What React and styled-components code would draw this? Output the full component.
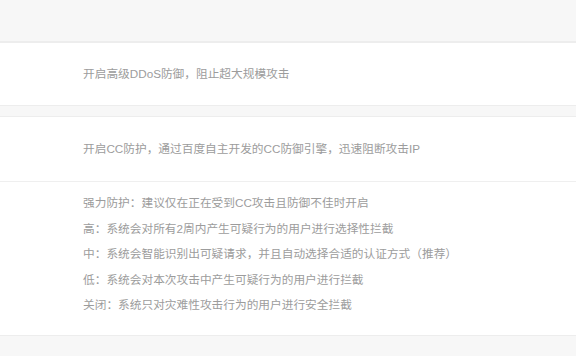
import styled, { createGlobalStyle } from "styled-components";

const GlobalStyle = createGlobalStyle`
  html, body {
    margin: 0;
    padding: 0;
    background: #f7f7f7;
  }
  body {
    font-family: "Liberation Sans", "Noto Sans CJK SC", sans-serif;
  }
`;

const levels = [
  "强力防护：建议仅在正在受到CC攻击且防御不佳时开启",
  "高：系统会对所有2周内产生可疑行为的用户进行选择性拦截",
  "中：系统会智能识别出可疑请求，并且自动选择合适的认证方式（推荐）",
  "低：系统会对本次攻击中产生可疑行为的用户进行拦截",
  "关闭：系统只对灾难性攻击行为的用户进行安全拦截",
];

export default function App() {
  return (
    <>
      <GlobalStyle />
      <Page>
        <TopBar />
        <Section>
          <Row height={62}>
            <Desc>开启高级DDoS防御，阻止超大规模攻击</Desc>
          </Row>
        </Section>
        <Section>
          <Row height={64}>
            <Desc>开启CC防护，通过百度自主开发的CC防御引擎，迅速阻断攻击IP</Desc>
          </Row>
          <Row divided>
            <LevelList>
              {levels.map((text) => (
                <Level key={text}>{text}</Level>
              ))}
            </LevelList>
          </Row>
        </Section>
      </Page>
    </>
  );
}

const Page = styled.div`
  display: flex;
  flex-direction: column;
  gap: 10px;
  width: 576px;
  height: 356px;
  background: #f7f7f7;
`;

const TopBar = styled.div`
  height: 41px;
  margin-bottom: -10px;
  border-bottom: 1px solid #ededed;
`;

const Section = styled.div`
  background: #fff;
  border-top: 1px solid #ededed;
  border-bottom: 1px solid #ededed;
  display: flex;
  flex-direction: column;

  &:first-of-type {
    border-top: none;
  }
`;

const Row = styled.div`
  display: flex;
  align-items: center;
  padding-left: 83px;
  height: ${(p) => (p.height ? `${p.height}px` : "auto")};
  border-top: ${(p) => (p.divided ? "1px solid #efefef" : "none")};
`;

const Desc = styled.div`
  font-size: 11.7px;
  color: #9c9c9c;
  line-height: 20px;
`;

const LevelList = styled.ul`
  list-style: none;
  margin: 0;
  padding: 8px 0 17px;
`;

const Level = styled.li`
  font-size: 11.7px;
  color: #9c9c9c;
  line-height: 25.6px;
  white-space: nowrap;
`;
